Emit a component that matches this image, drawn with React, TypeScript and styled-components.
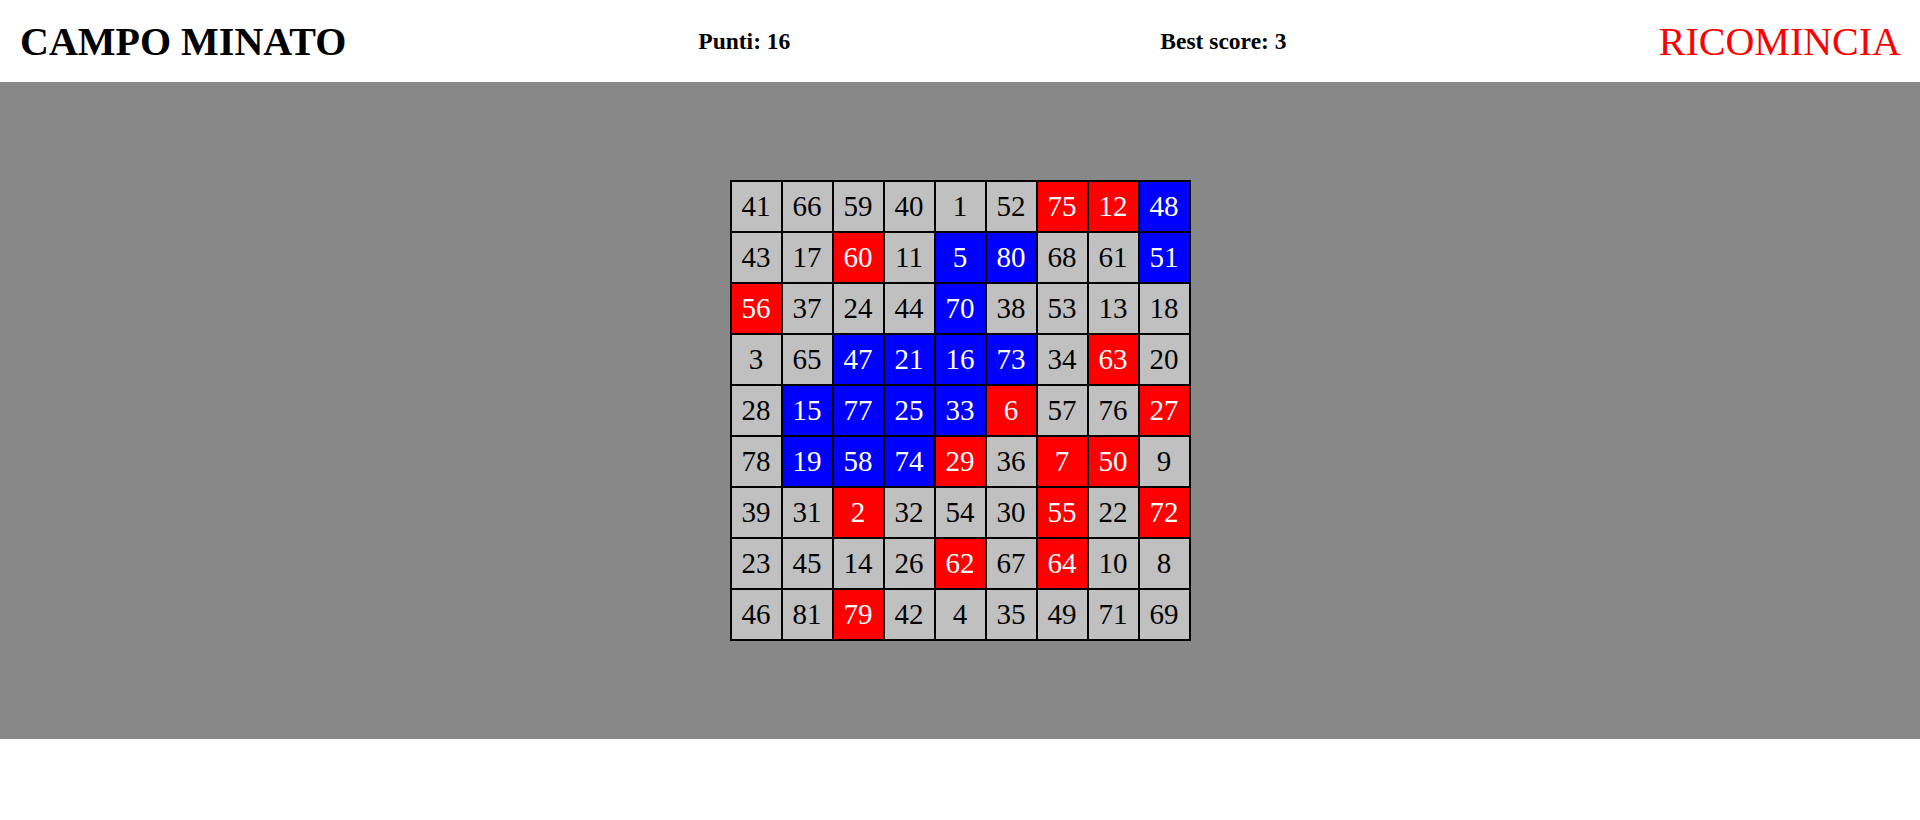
import React from "react";
import styled, { createGlobalStyle } from "styled-components";

const GlobalStyle = createGlobalStyle`
  html, body {
    margin: 0;
    padding: 0;
    background: #ffffff;
    font-family: "Liberation Serif", "Times New Roman", serif;
  }
`;

const Header = styled.header`
  height: 82px;
  display: flex;
  align-items: center;
  padding: 0 19px 0 20px;
  box-sizing: border-box;
`;

const Title = styled.h1`
  margin: 0;
  font-size: 40px;
  font-weight: bold;
  color: #000;
`;

const Score = styled.div<{ $gap: number }>`
  margin-left: ${(p) => p.$gap}px;
  font-size: 23.5px;
  font-weight: bold;
  color: #000;
`;

const Restart = styled.button`
  margin-left: auto;
  border: none;
  background: none;
  padding: 0;
  font-family: "Liberation Serif", "Times New Roman", serif;
  font-size: 40px;
  color: #ff0000;
  cursor: pointer;
`;

const Field = styled.main`
  background: #888888;
  padding: 98px 0 98px;
  display: flex;
  justify-content: center;
`;

const Board = styled.div`
  display: grid;
  grid-template-columns: repeat(9, 51px);
  grid-auto-rows: 51px;
  border: 1px solid #000;
`;

type Kind = "g" | "r" | "b";

const bg: Record<Kind, string> = { g: "#c0c0c0", r: "#ff0000", b: "#0000ff" };

const Cell = styled.div<{ $kind: Kind }>`
  box-sizing: border-box;
  border: 1px solid #000;
  background: ${(p) => bg[p.$kind]};
  color: ${(p) => (p.$kind === "g" ? "#000" : "#fff")};
  display: flex;
  align-items: center;
  justify-content: center;
  font-size: 29px;
`;

const rows = [
  "41 66 59 40 1 52 75r 12r 48b",
  "43 17 60r 11 5b 80b 68 61 51b",
  "56r 37 24 44 70b 38 53 13 18",
  "3 65 47b 21b 16b 73b 34 63r 20",
  "28 15b 77b 25b 33b 6r 57 76 27r",
  "78 19b 58b 74b 29r 36 7r 50r 9",
  "39 31 2r 32 54 30 55r 22 72r",
  "23 45 14 26 62r 67 64r 10 8",
  "46 81 79r 42 4 35 49 71 69",
];

const cells = rows.flatMap((r) =>
  r.split(" ").map((t) => {
    const last = t[t.length - 1];
    if (last === "r" || last === "b") return { n: t.slice(0, -1), k: last as Kind };
    return { n: t, k: "g" as Kind };
  })
);

export default function App() {
  return (
    <>
      <GlobalStyle />
      <Header>
        <Title>CAMPO MINATO</Title>
        <Score $gap={352}>Punti: 16</Score>
        <Score $gap={370}>Best score: 3</Score>
        <Restart>RICOMINCIA</Restart>
      </Header>
      <Field>
        <Board>
          {cells.map((c, i) => (
            <Cell key={i} $kind={c.k}>
              {c.n}
            </Cell>
          ))}
        </Board>
      </Field>
    </>
  );
}
